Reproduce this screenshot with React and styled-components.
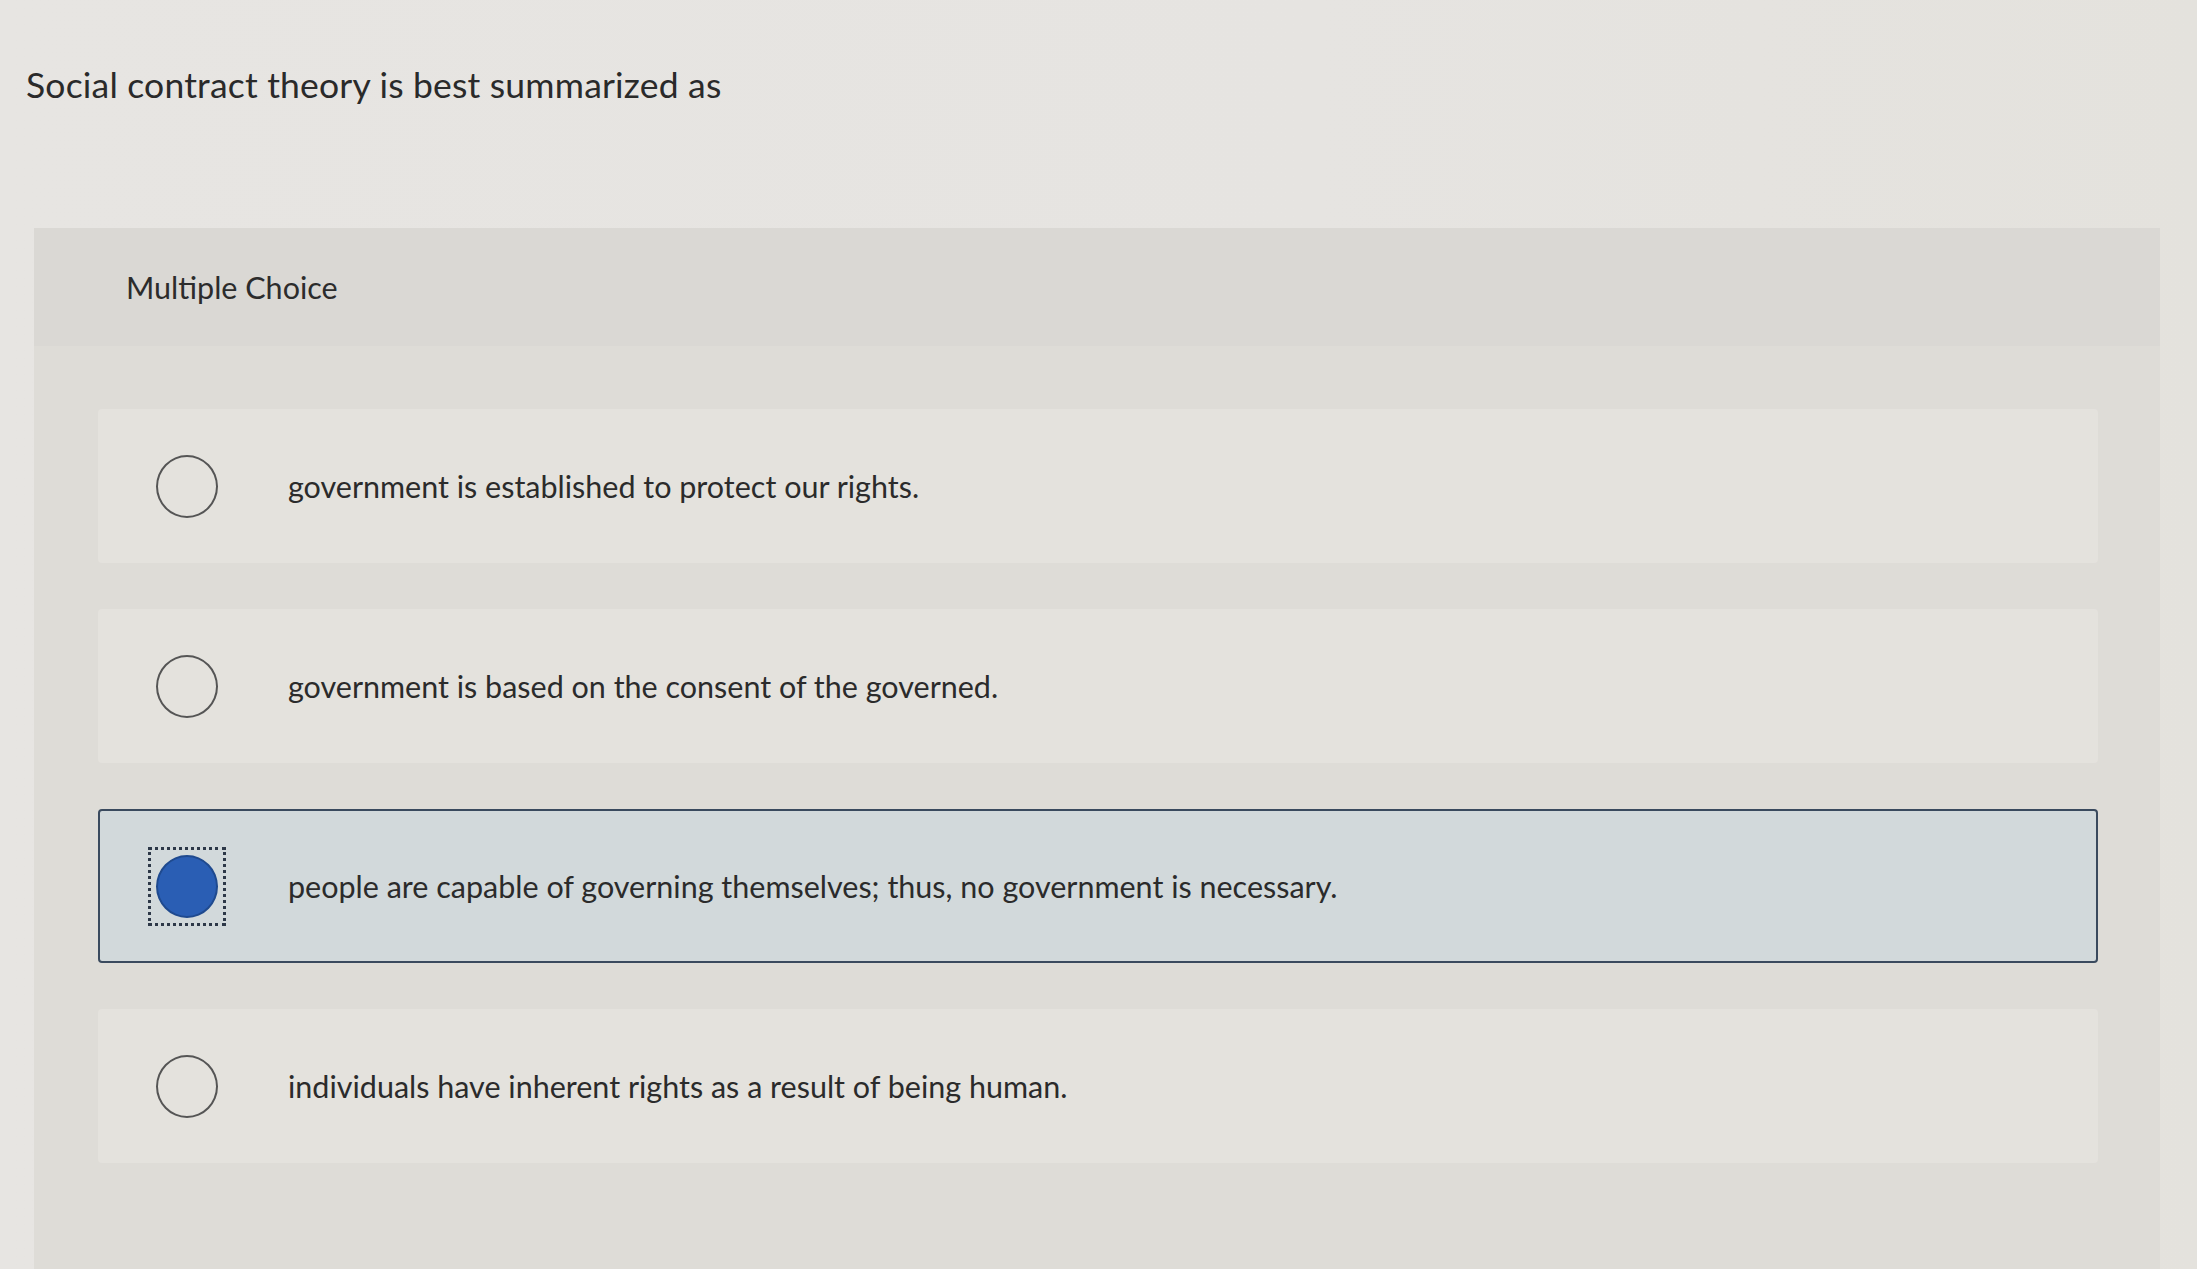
import React from "react";
import styled, { createGlobalStyle } from "styled-components";

const Global = createGlobalStyle`
  html, body {
    margin: 0;
    padding: 0;
    background: #e6e4e0;
    overflow: hidden;
  }
  body {
    font-family: Lato, "Open Sans", "Liberation Sans", sans-serif;
    color: #2b2b2b;
  }
`;

const Page = styled.div`
  height: 1269px;
  background: linear-gradient(90deg, #e7e5e2 0%, #e6e4e1 60%, #e4e2dd 100%);
  padding-top: 63px;
  box-sizing: border-box;
`;

const Question = styled.h1`
  margin: 0 0 0 26px;
  font-size: 35.5px;
  line-height: 44px;
  font-weight: 400;
  color: #2a2a2a;
  letter-spacing: 0.2px;
`;

const Panel = styled.section`
  margin: 121px 0 0 34px;
  width: 2126px;
  height: 1100px;
  background: #dedcd7;
`;

const PanelHeader = styled.div`
  height: 118px;
  display: flex;
  align-items: center;
  padding-left: 92px;
  background: #dad8d4;
  font-size: 30.5px;
  color: #2c2c2c;
`;

const Options = styled.div`
  display: flex;
  flex-direction: column;
  gap: 46px;
  padding: 63px 62px 0 64px;
`;

const Option = styled.label`
  height: 154px;
  display: flex;
  align-items: center;
  gap: 70px;
  padding-left: ${(p) => (p.$selected ? "48px" : "56px")};
  box-sizing: border-box;
  background: ${(p) => (p.$selected ? "#d2d9db" : "#e4e2dd")};
  border: ${(p) => (p.$selected ? "2.5px solid #3a4a5e" : "2.5px solid transparent")};
  border-radius: 4px;
  font-size: 30.5px;
  color: #2b2b2b;
  cursor: pointer;
`;

const Radio = styled.span`
  width: 62px;
  height: 63px;
  border-radius: 50%;
  box-sizing: border-box;
  border: 2.5px solid #555;
  background: transparent;
  flex: none;
`;

const Focus = styled.span`
  flex: none;
  padding: 5px;
  border: 3px dotted #2d3848;
  display: flex;
  margin-right: -8px;
`;

const Filled = styled.span`
  width: 62px;
  height: 63px;
  border-radius: 50%;
  box-sizing: border-box;
  border: 2px solid #1f4a8f;
  background: #2a5eb4;
`;

const choices = [
  "government is established to protect our rights.",
  "government is based on the consent of the governed.",
  "people are capable of governing themselves; thus, no government is necessary.",
  "individuals have inherent rights as a result of being human.",
];

const App = () => {
  const selected = 2;
  return (
    <Page>
      <Global />
      <Question>Social contract theory is best summarized as</Question>
      <Panel>
        <PanelHeader>Multiple Choice</PanelHeader>
        <Options>
          {choices.map((text, i) => (
            <Option key={i} $selected={i === selected}>
              {i === selected ? (
                <Focus>
                  <Filled />
                </Focus>
              ) : (
                <Radio />
              )}
              <span>{text}</span>
            </Option>
          ))}
        </Options>
      </Panel>
    </Page>
  );
};

export default App;
